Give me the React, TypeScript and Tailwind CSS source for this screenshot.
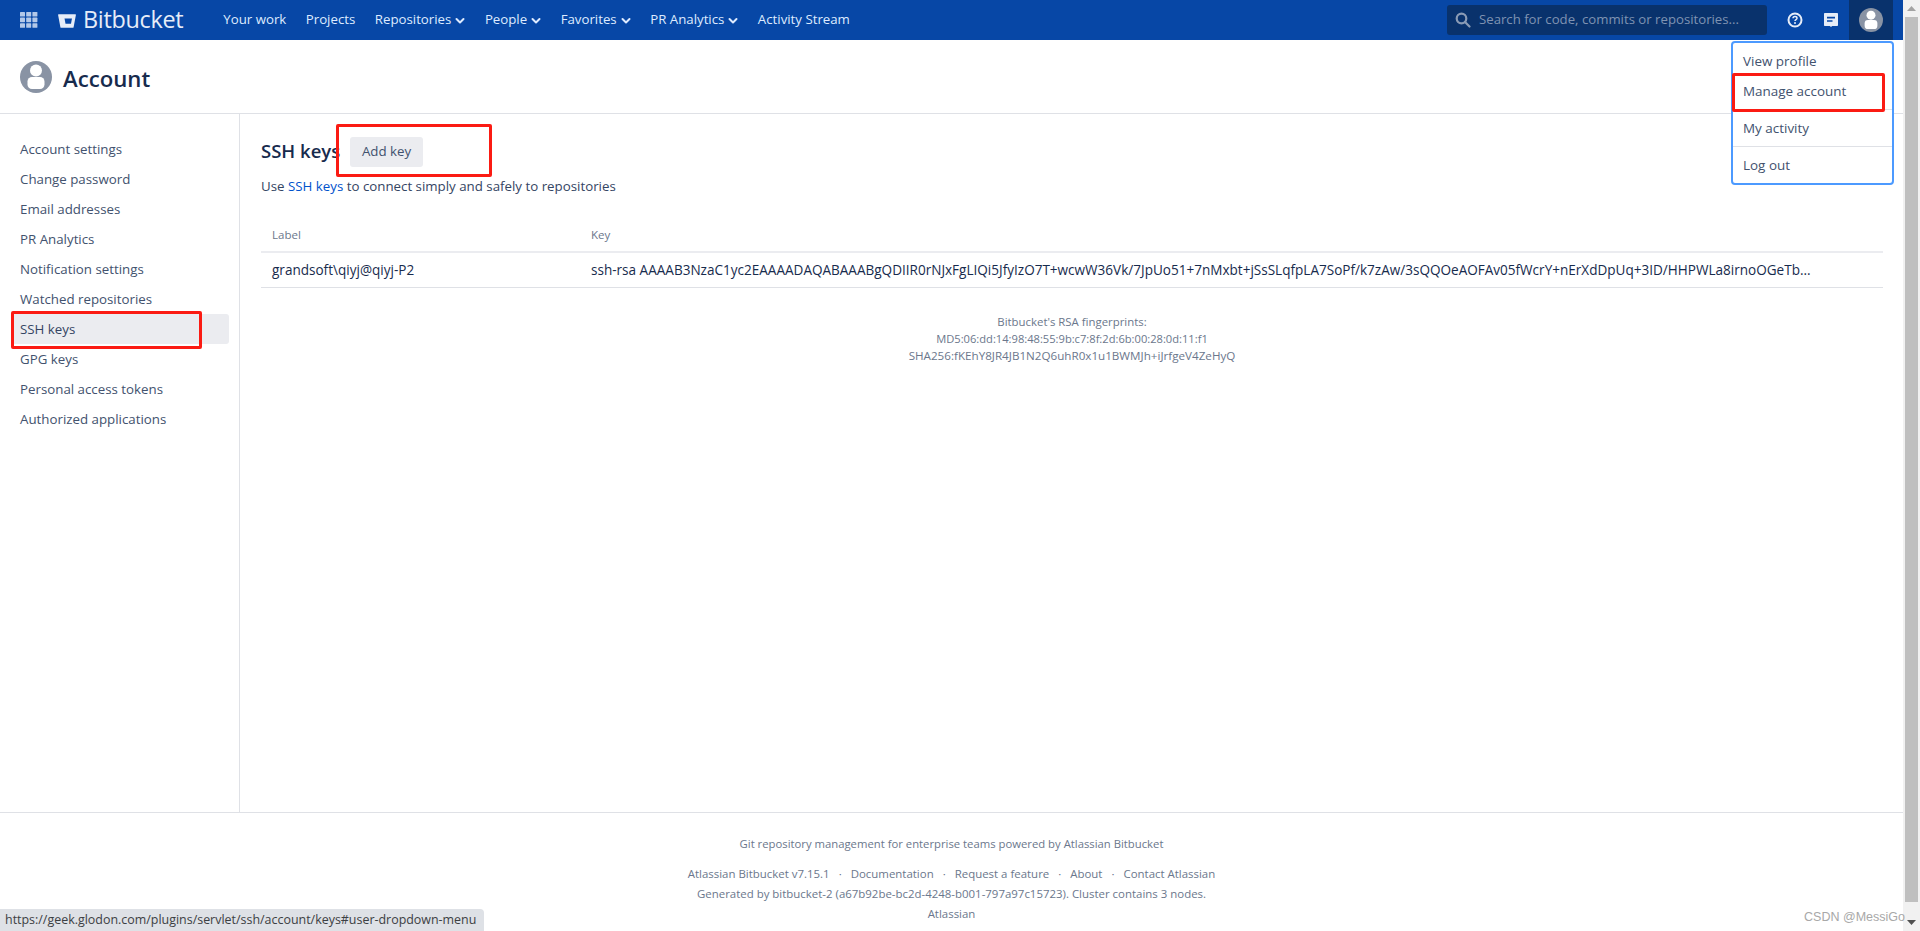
import React from "react";

const sans = "font-['Open_Sans','Noto_Sans',sans-serif]";

function Chevron() {
  return (
    <svg width="10" height="8" viewBox="0 0 10 8" className="ml-[4px] mt-[1px]">
      <path d="M1.5 2l3.5 3.5L8.5 2" fill="none" stroke="#deebff" strokeWidth="2" strokeLinecap="round" strokeLinejoin="round" />
    </svg>
  );
}

function AppGrid() {
  return (
    <svg width="18" height="16" viewBox="0 0 18 16" fill="#b3c8e8">
      {[0, 6.2, 12.4].map((x) =>
        [0, 5.6, 11.2].map((y) => <rect key={`${x}-${y}`} x={x} y={y} width="5" height="4.6" rx="0.6" />)
      )}
    </svg>
  );
}

function Bucket() {
  return (
    <svg width="18" height="14" viewBox="0 0 18 16" preserveAspectRatio="none">
      <path d="M0.6 0.4h16.8c.4 0 .6.3.5.7L15.6 15c-.1.4-.3.6-.7.6H3.1c-.4 0-.6-.2-.7-.6L.1 1.1C0 .7.2.4.6.4z" fill="#e6edf8" />
      <path d="M6.500 5h7.500l-1 6H7.500z" fill="#0747a6" />
    </svg>
  );
}

function Avatar({ size }: { size: number }) {
  return (
    <svg width={size} height={size} viewBox="0 0 32 32" className="shrink-0">
      <circle cx="16" cy="16" r="16" fill="#8993a4" />
      <circle cx="16" cy="9.500" r="6" fill="#fff" />
      <rect x="7.500" y="16" width="17" height="12" rx="4.500" fill="#fff" />
    </svg>
  );
}

const side = [
  "Account settings",
  "Change password",
  "Email addresses",
  "PR Analytics",
  "Notification settings",
  "Watched repositories",
  "SSH keys",
  "GPG keys",
  "Personal access tokens",
  "Authorized applications",
];

const nav: [string, boolean][] = [
  ["Your work", false],
  ["Projects", false],
  ["Repositories", true],
  ["People", true],
  ["Favorites", true],
  ["PR Analytics", true],
  ["Activity Stream", false],
];

function RedBox({ className }: { className: string }) {
  return <div className={`absolute border-[3px] border-[#fb1b13] rounded-[2px] pointer-events-none ${className}`} />;
}

export default function App() {
  return (
    <div className={`relative flex h-[931px] overflow-hidden bg-white text-[13.3px] text-[#42526e] ${sans}`}>
      <div className="relative flex w-[1903px] flex-col">
        <header className="flex h-[40px] shrink-0 items-center bg-[#0747a6] text-[#deebff]">
          <div className="ml-[20px]"><AppGrid /></div>
          <div className="ml-[20px] mt-[2px]"><Bucket /></div>
          <span className="ml-[7px] text-[23.4px] leading-none text-[#e6edf8] tracking-[-0.3px]">Bitbucket</span>
          <nav className="ml-[40px] flex items-center gap-[19.5px] text-[13.25px]">
            {nav.map(([t, c]) => (
              <span key={t} className="flex items-center">
                {t}
                {c && <Chevron />}
              </span>
            ))}
          </nav>
          <div className="ml-auto flex h-[30px] w-[320px] items-center rounded-[3px] bg-[#09326c] pl-[8px]">
            <svg width="16" height="16" viewBox="0 0 16 16" fill="none" stroke="#8a9bb5" strokeWidth="2.200">
              <circle cx="6.500" cy="6.500" r="4.800" />
              <path d="M10 10l4.500 4.500" strokeLinecap="round" />
            </svg>
            <span className="ml-[8px] text-[13.2px] text-[#7f93b2]">Search for code, commits or repositories...</span>
          </div>
          <svg width="16" height="16" viewBox="0 0 16 16" className="ml-[20px]">
            <circle cx="8" cy="8" r="6.500" fill="none" stroke="#e6edf8" strokeWidth="2" />
            <path d="M6 6.300c0-1.100.9-1.800 2-1.800s2 .7 2 1.700c0 1.500-2 1.400-2 2.900" fill="none" stroke="#e6edf8" strokeWidth="1.500" />
            <circle cx="8" cy="11" r="1" fill="#e6edf8" />
          </svg>
          <svg width="16" height="16" viewBox="0 0 16 16" className="ml-[20px]">
            <path d="M2 1h12c.6 0 1 .4 1 1v11c0 .6-.4 1-1 1H9.200L8 15l-1.200-1H2c-.6 0-1-.4-1-1V2c0-.6.4-1 1-1z" fill="#e6edf8" />
            <path d="M4 4.800h8v1.600H4zM4 8.200h5.500v1.600H4z" fill="#0747a6" />
          </svg>
          <div className="ml-[10px] mr-[10px] flex h-[40px] w-[44px] items-center justify-center bg-[#09326c]">
            <Avatar size={24} />
          </div>
        </header>

        <div className="flex h-[74px] shrink-0 items-center border-b border-[#dfe1e6] pl-[20px]">
          <Avatar size={32} />
          <h1 className="ml-[11px] mt-[5px] text-[22.2px] font-semibold text-[#172b4d]">Account</h1>
        </div>

        <div className="flex h-[698px] shrink-0">
          <aside className="w-[240px] shrink-0 border-r border-[#dfe1e6] pl-[12px] pr-[10px] pt-[20px]">
            {side.map((s) => (
              <div
                key={s}
                className={`flex h-[30px] items-center rounded-[3px] pl-[8px] pt-[2px] ${s === "SSH keys" ? "bg-[#ebecf0] font-medium text-[#344563]" : ""}`}
              >
                {s}
              </div>
            ))}
          </aside>
          <main className="flex-1 pl-[21px] pr-[20px] pt-[23px]">
            <div className="flex h-[30px] items-center">
              <h2 className="mb-[3px] w-[89px] text-[18.5px] font-semibold text-[#172b4d]">SSH keys</h2>
              <button className="h-[30px] w-[73px] rounded-[3px] bg-[#ebecf0]">Add key</button>
            </div>
            <p className="mt-[10px] text-[#344563]">
              Use <span className="text-[#0052cc]">SSH keys</span> to connect simply and safely to repositories
            </p>
            <div className="mt-[25px] flex h-[31px] items-center border-b-2 border-[#ebecf0] pb-[3px] text-[11.5px] font-medium text-[#6b778c]">
              <span className="w-[330px] pl-[11px]">Label</span>
              <span>Key</span>
            </div>
            <div className="flex h-[35px] items-center border-b border-[#dfe1e6] text-[13.55px] text-[#172b4d]">
              <span className="w-[330px] pl-[11px]">grandsoft\qiyj@qiyj-P2</span>
              <span className="truncate">ssh-rsa AAAAB3NzaC1yc2EAAAADAQABAAABgQDIIR0rNJxFgLIQi5JfyIzO7T+wcwW36Vk/7JpUo51+7nMxbt+jSsSLqfpLA7SoPf/k7zAw/3sQQOeAOFAv05fWcrY+nErXdDpUq+3ID/HHPWLa8irnoOGeTb...</span>
            </div>
            <div className="mt-[25px] text-center text-[11.65px] leading-[17px] text-[#6b778c]">
              <div className="text-[11.4px]">Bitbucket's RSA fingerprints:</div>
              <div className="text-[11.15px]">MD5:06:dd:14:98:48:55:9b:c7:8f:2d:6b:00:28:0d:11:f1</div>
              <div>SHA256:fKEhY8JR4JB1N2Q6uhR0x1u1BWMJh+iJrfgeV4ZeHyQ</div>
            </div>
          </main>
        </div>

        <footer className="flex-1 border-t border-[#dfe1e6] pt-[21px] text-center text-[11.45px] leading-[20px] text-[#6b778c]">
          <div className="text-[11.3px]">Git repository management for enterprise teams powered by Atlassian Bitbucket</div>
          <div className="mt-[10px] flex justify-center gap-[9px]">
            <span>Atlassian Bitbucket v7.15.1</span><span>·</span>
            <span>Documentation</span><span>·</span>
            <span>Request a feature</span><span>·</span>
            <span>About</span><span>·</span>
            <span>Contact Atlassian</span>
          </div>
          <div>Generated by bitbucket-2 (a67b92be-bc2d-4248-b001-797a97c15723). Cluster contains 3 nodes.</div>
          <div>Atlassian</div>
        </footer>

        <div className="absolute right-[9px] top-[41px] w-[163px] rounded-[4px] border-2 border-[#4c9aff] bg-white text-[13.45px]">
          <div className="flex h-[36px] items-end pl-[10px] pb-[8px]">View profile</div>
          <div className="flex h-[30px] items-center pl-[10px] pb-[5px]">Manage account</div>
          <div className="flex h-[37px] items-center border-t border-[#dfe1e6] pl-[10px] pt-[1px]">My activity</div>
          <div className="flex h-[37px] items-center border-t border-[#dfe1e6] pl-[10px] pt-[1px]">Log out</div>
        </div>

        <RedBox className="left-[11px] top-[311px] h-[38px] w-[191px]" />
        <RedBox className="left-[336px] top-[124px] h-[53px] w-[156px]" />
        <RedBox className="left-[1732px] top-[73px] h-[39px] w-[153px]" />
      </div>

      <div className="flex w-[17px] flex-col items-center bg-[#f1f1f1]">
        <div className="flex h-[17px] shrink-0 items-center justify-center">
          <svg width="9" height="5" viewBox="0 0 9 5"><path d="M4.500 0L9 5H0z" fill="#a3a3a3" /></svg>
        </div>
        <div className="h-[885px] w-[13px] shrink-0 bg-[#bfbfbf]" />
        <div className="mt-auto flex h-[17px] items-center justify-center">
          <svg width="9" height="5" viewBox="0 0 9 5"><path d="M0 0h9L4.500 5z" fill="#505050" /></svg>
        </div>
      </div>

      <div className="absolute bottom-0 left-0 flex h-[22px] w-[484px] items-center rounded-tr-[4px] bg-[#dee1e6] pl-[5px] text-[12.45px] text-[#3c4043]">
        https://geek.glodon.com/plugins/servlet/ssh/account/keys#user-dropdown-menu
      </div>
      <div className="absolute bottom-[6px] right-[15px] font-['Liberation_Sans',sans-serif] text-[12.5px] leading-[16px] text-[#a8a8a8]">
        CSDN @MessiGo
      </div>
    </div>
  );
}
